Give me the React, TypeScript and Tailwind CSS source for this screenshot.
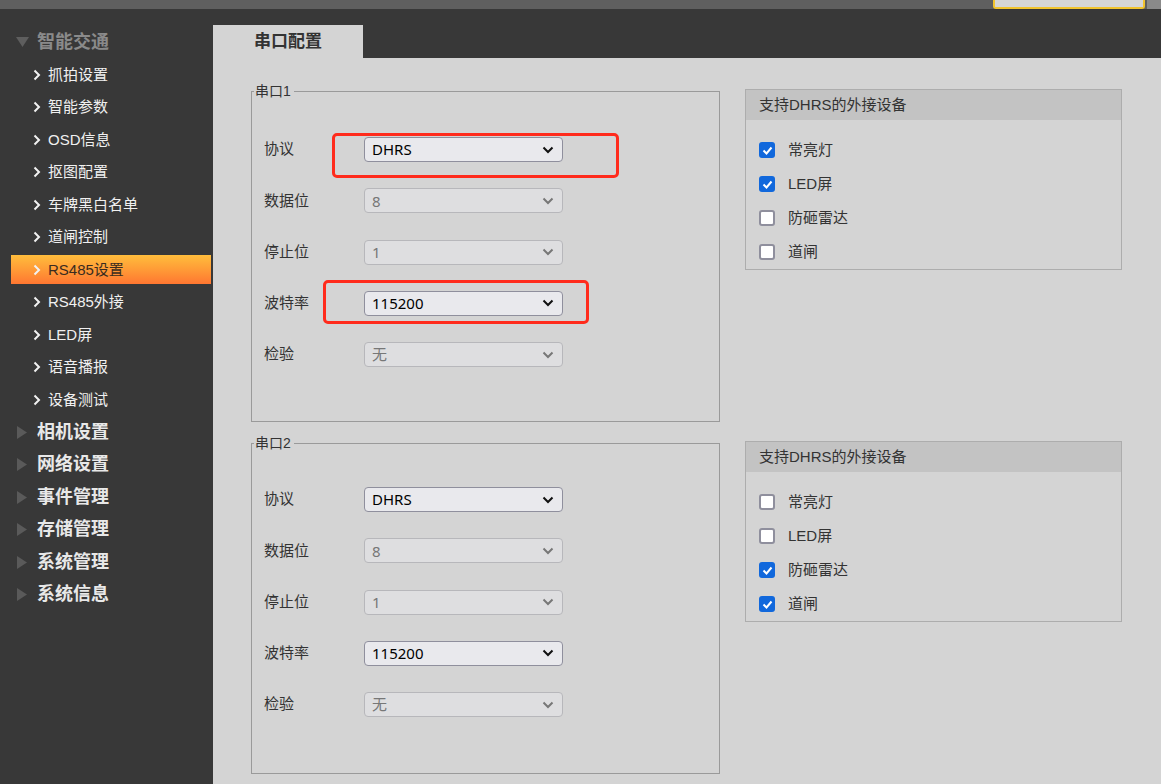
import React from "react";

const subItems = ["抓拍设置", "智能参数", "OSD信息", "抠图配置", "车牌黑白名单", "道闸控制", "RS485设置", "RS485外接", "LED屏", "语音播报", "设备测试"];
const groups = ["相机设置", "网络设置", "事件管理", "存储管理", "系统管理", "系统信息"];

function Chevron({ color = "#f2f2f2" }: { color?: string }) {
  return (
    <svg width="8" height="12" viewBox="0 0 8 12">
      <path d="M1.5 1.5l4.5 4.5-4.5 4.5" fill="none" stroke={color} strokeWidth="2" />
    </svg>
  );
}

function Sidebar() {
  return (
    <div className="w-[213px] shrink-0 bg-[#383838] pt-[17px]">
      <div className="h-[32.5px] flex items-center pl-[16px]">
        <svg width="13" height="10" viewBox="0 0 13 10">
          <path d="M0 0h13L6.5 10z" fill="#5e5e5e" />
        </svg>
        <span className="ml-[8px] text-[18px] font-bold text-[#8a8a8a]">智能交通</span>
      </div>
      {subItems.map((s) => {
        const active = s === "RS485设置";
        return (
          <div key={s} className="h-[32.5px] flex items-center">
            <div
              className={`ml-[11px] w-[200px] h-[29px] flex items-center pl-[22px] ${
                active ? "bg-gradient-to-b from-[#ffbd3c] to-[#ff7631]" : ""
              }`}
            >
              <Chevron />
              <span className={`ml-[7px] text-[15px] ${active ? "text-[#3a2c20]" : "text-[#f0f0f0]"}`}>{s}</span>
            </div>
          </div>
        );
      })}
      {groups.map((g) => (
        <div key={g} className="h-[32.5px] flex items-center pl-[17px]">
          <svg width="10" height="13" viewBox="0 0 10 13">
            <path d="M0 0l10 6.5L0 13z" fill="#5a5a5a" />
          </svg>
          <span className="ml-[10px] text-[18px] font-bold text-[#e8e8e8]">{g}</span>
        </div>
      ))}
    </div>
  );
}

function Select({ value, disabled }: { value: string; disabled?: boolean }) {
  return (
    <div
      className={`w-[199px] h-[25px] rounded-[4px] border flex items-center justify-between pl-[7px] pr-[8px] font-['Noto_Sans','Noto_Sans_CJK_SC',sans-serif] text-[15px] ${
        disabled ? "bg-[#dedee0] border-[#b7b7bb] text-[#777]" : "bg-[#e9e9ed] border-[#8f8f9d] text-black"
      }`}
    >
      <span>{value}</span>
      <svg width="12" height="8" viewBox="0 0 12 8">
        <path d="M1.5 1.5l4.5 4.5 4.5-4.5" fill="none" stroke={disabled ? "#777" : "#111"} strokeWidth="2" />
      </svg>
    </div>
  );
}

function Checkbox({ checked }: { checked: boolean }) {
  if (checked)
    return (
      <div className="w-[16px] h-[16px] rounded-[3px] bg-[#1168dc] flex items-center justify-center">
        <svg width="11" height="9" viewBox="0 0 11 9">
          <path d="M1.5 4.5l3 3 5-6" fill="none" stroke="#fff" strokeWidth="2" />
        </svg>
      </div>
    );
  return <div className="w-[16px] h-[16px] rounded-[3px] bg-white border-2 border-[#8f8f9d]" />;
}

function Port({ name, pt, checks }: { name: string; pt: string; checks: boolean[] }) {
  const rows: [string, string, boolean][] = [
    ["协议", "DHRS", false],
    ["数据位", "8", true],
    ["停止位", "1", true],
    ["波特率", "115200", false],
    ["检验", "无", true],
  ];
  const devices = ["常亮灯", "LED屏", "防砸雷达", "道闸"];
  return (
    <div className="flex items-start gap-[25px]">
      <fieldset className="w-[469px] h-[339px] border border-[#9a9a9a]">
        <legend className="ml-[2px] pl-[1px] pr-[3px] text-[14px] leading-[16px] text-[#333]">{name}</legend>
        <div className={`flex flex-col gap-[26.25px] pl-[12px] ${pt}`}>
          {rows.map(([label, value, disabled]) => (
            <div key={label} className="h-[25px] flex items-center">
              <span className="w-[100px] text-[15px] text-[#333]">{label}</span>
              <Select value={value} disabled={disabled} />
            </div>
          ))}
        </div>
      </fieldset>
      <div className="mt-[6px] w-[377px] h-[181px] border border-[#adadad]">
        <div className="h-[30px] bg-[#c3c3c3] pl-[13px] flex items-center text-[15px] text-[#333]">支持DHRS的外接设备</div>
        <div className="pt-[13px] pl-[13px]">
          {devices.map((d, i) => (
            <div key={d} className="h-[34px] flex items-center">
              <Checkbox checked={checks[i]} />
              <span className="ml-[13px] text-[15px] text-[#333]">{d}</span>
            </div>
          ))}
        </div>
      </div>
    </div>
  );
}

export default function App() {
  return (
    <div className="w-[1161px] h-[784px] overflow-hidden flex flex-col font-['Liberation_Sans','Noto_Sans_CJK_SC',sans-serif]">
      <div className="h-[9px] shrink-0 bg-[#5f5f5f] flex justify-end gap-[2px]">
        <div className="w-[152px] h-[9px] border-2 border-t-0 border-[#f2c42e] rounded-b-[3px] bg-[#d6d6d6]" />
        <div className="w-[14px] h-[9px] bg-[#8a8a8a]" />
      </div>
      <div className="flex flex-1">
        <Sidebar />
        <div className="flex-1 flex flex-col">
          <div className="h-[49px] shrink-0 bg-[#383838] pt-[16px]">
            <div className="w-[150px] h-[33px] bg-[#d4d4d4] flex items-center justify-center text-[17px] font-bold text-[#333]">
              串口配置
            </div>
          </div>
          <div className="relative flex-1 bg-[#d4d4d4] pl-[38px] pt-[25px] flex flex-col gap-[13px]">
            <Port name="串口1" pt="pt-[38px]" checks={[true, true, false, false]} />
            <Port name="串口2" pt="pt-[36px]" checks={[false, false, true, true]} />
            <div className="absolute left-[119px] top-[75px] w-[287px] h-[45px] border-[3px] border-[#ff2b1c] rounded-[5px]" />
            <div className="absolute left-[110px] top-[222px] w-[266px] h-[44px] border-[3px] border-[#ff2b1c] rounded-[5px]" />
          </div>
        </div>
      </div>
    </div>
  );
}
